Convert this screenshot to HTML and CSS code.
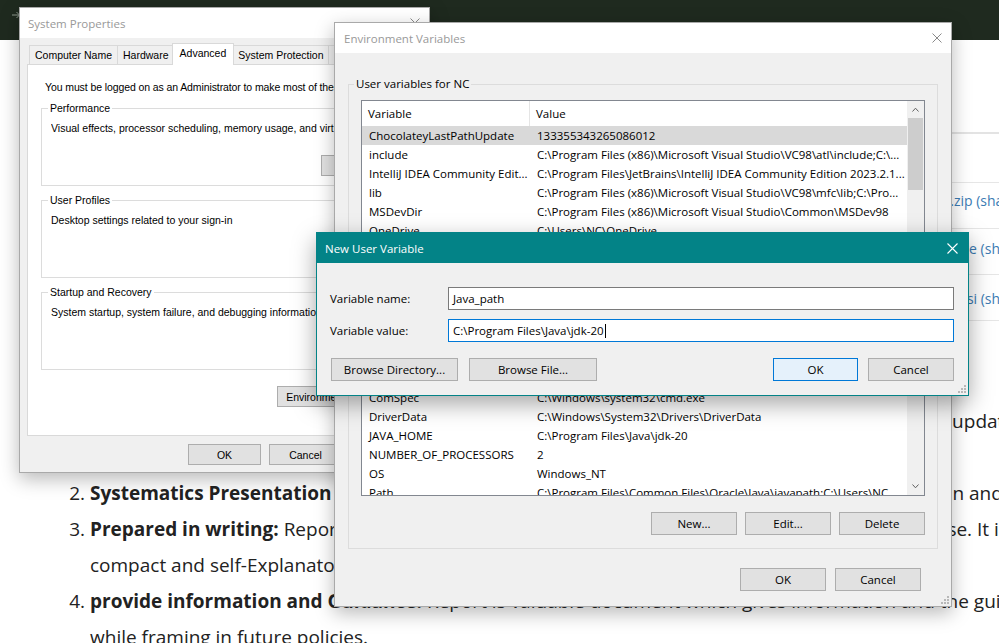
FILE: index.html
```html
<!DOCTYPE html>
<html>
<head>
<meta charset="utf-8">
<title>Environment Variables</title>
<link rel="stylesheet" href="styles.css">
</head>
<body>
<div class="page">
  <header class="topbar">
    <svg class="tb-icon" width="10" height="8" viewBox="0 0 10 8"><path d="M0 4H7.5M4.5 1L7.5 4L4.5 7M9.5 0V8" stroke="#8f998f" fill="none" stroke-width="1"/></svg>
  </header>
  <main class="content">
    <div class="downloads">
      <div class="dl-row dl-head"><span>Product/file description</span><span>File size</span><span>Download</span></div>
      <div class="dl-row"><span>x64 Compressed Archive</span><span>180.71 MB</span><a href="#">jdk-20_windows-x64_bin.zip (sha256)</a></div>
      <div class="dl-row r2"><span>x64 Installer</span><span>159.97 MB</span><a href="#">jdk-20_windows-x64_bin.exe (sha256)</a></div>
      <div class="dl-row r3"><span>x64 MSI Installer</span><span>158.75 MB</span><a href="#">jdk-20_windows-x64_bin.msi (sha256)</a></div>
    </div>
    <ol class="article">
      <li><strong>Up to date information:</strong> A Report contains relevant and up-to-date information, that is regularly updated<br>from time to time.</li>
      <li><strong>Systematics Presentation of facts:</strong> Report is a systematic presentation of fact, figures, conclusion and recommendation.</li>
      <li><strong>Prepared in writing:</strong> Report is always prepared in written form and for the specific official purpose. It is<br>compact and self-Explanatory.</li>
      <li><strong>provide information and Guidance:</strong> Report is valuable document which gives information and the guidance to management<br>while framing in future policies.</li>
    </ol>
  </main>
</div>

<section class="win sysprops">
  <div class="titlebar">
    <span>System Properties</span>
    <svg class="x" width="10" height="10" viewBox="0 0 10 10"><path d="M0.5 0.5L9.5 9.5M9.5 0.5L0.5 9.5" stroke="#8a8a8a" stroke-width="1"/></svg>
  </div>
  <div class="sp-body">
    <div class="tabs">
      <div class="tab">Computer Name</div>
      <div class="tab">Hardware</div>
      <div class="tab sel">Advanced</div>
      <div class="tab">System Protection</div>
      <div class="tab">Remote</div>
    </div>
    <div class="panel">
      <p class="admin">You must be logged on as an Administrator to make most of these changes.</p>
      <fieldset class="grp">
        <legend>Performance</legend>
        <p>Visual effects, processor scheduling, memory usage, and virtual memory</p>
        <div class="grp-btns"><button class="btn sbtn">Settings...</button></div>
      </fieldset>
      <fieldset class="grp">
        <legend>User Profiles</legend>
        <p>Desktop settings related to your sign-in</p>
        <div class="grp-btns"><button class="btn sbtn">Settings...</button></div>
      </fieldset>
      <fieldset class="grp">
        <legend>Startup and Recovery</legend>
        <p>System startup, system failure, and debugging information</p>
        <div class="grp-btns"><button class="btn sbtn">Settings...</button></div>
      </fieldset>
      <div class="env-row"><button class="btn ebtn">Environment Variables...</button></div>
    </div>
    <div class="sp-foot">
      <button class="btn fbtn">OK</button>
      <button class="btn fbtn">Cancel</button>
      <button class="btn fbtn">Apply</button>
    </div>
  </div>
</section>

<section class="win envvars">
  <div class="titlebar">
    <span>Environment Variables</span>
    <svg class="x" width="10" height="10" viewBox="0 0 10 10"><path d="M0.5 0.5L9.5 9.5M9.5 0.5L0.5 9.5" stroke="#8a8a8a" stroke-width="1"/></svg>
  </div>
  <div class="ev-body">
    <fieldset class="egrp">
      <legend>User variables for NC</legend>
      <div class="lv">
        <div class="lv-main">
          <div class="lv-head"><div>Variable</div><div>Value</div></div>
          <div class="lv-row sel"><div>ChocolateyLastPathUpdate</div><div>133355343265086012</div></div>
          <div class="lv-row"><div>include</div><div>C:\Program Files (x86)\Microsoft Visual Studio\VC98\atl\include;C:\...</div></div>
          <div class="lv-row"><div>IntelliJ IDEA Community Edit...</div><div>C:\Program Files\JetBrains\IntelliJ IDEA Community Edition 2023.2.1...</div></div>
          <div class="lv-row"><div>lib</div><div>C:\Program Files (x86)\Microsoft Visual Studio\VC98\mfc\lib;C:\Pro...</div></div>
          <div class="lv-row"><div>MSDevDir</div><div>C:\Program Files (x86)\Microsoft Visual Studio\Common\MSDev98</div></div>
          <div class="lv-row"><div>OneDrive</div><div>C:\Users\NC\OneDrive</div></div>
          <div class="lv-row"><div>OneDriveConsumer</div><div>C:\Users\NC\OneDrive</div></div>
          <div class="lv-row"><div>Path</div><div>C:\Users\NC\AppData\Local\Microsoft\WindowsApps;</div></div>
        </div>
        <div class="sb">
          <div class="sb-btn"><svg width="7" height="5" viewBox="0 0 7 5"><path d="M0.5 4.5L3.5 1.2L6.5 4.5" stroke="#606060" fill="none" stroke-width="1"/></svg></div>
          <div class="sb-thumb"></div>
        </div>
      </div>
      <div class="btnrow">
        <button class="btn ebtn2">New...</button>
        <button class="btn ebtn2">Edit...</button>
        <button class="btn ebtn2">Delete</button>
      </div>
    </fieldset>
    <fieldset class="egrp egrp2">
      <legend>System variables</legend>
      <div class="lv">
        <div class="lv-main">
          <div class="lv-head"><div>Variable</div><div>Value</div></div>
          <div class="lv-row"><div>ChocolateyInstall</div><div>C:\ProgramData\chocolatey</div></div>
          <div class="lv-row"><div>ComSpec</div><div>C:\Windows\system32\cmd.exe</div></div>
          <div class="lv-row"><div>DriverData</div><div>C:\Windows\System32\Drivers\DriverData</div></div>
          <div class="lv-row"><div>JAVA_HOME</div><div>C:\Program Files\Java\jdk-20</div></div>
          <div class="lv-row"><div>NUMBER_OF_PROCESSORS</div><div>2</div></div>
          <div class="lv-row"><div>OS</div><div>Windows_NT</div></div>
          <div class="lv-row"><div>Path</div><div>C:\Program Files\Common Files\Oracle\Java\javapath;C:\Users\NC...</div></div>
        </div>
        <div class="sb">
          <div class="sb-track"></div>
          <div class="sb-btn"><svg width="7" height="5" viewBox="0 0 7 5"><path d="M0.5 0.5L3.5 3.8L6.5 0.5" stroke="#606060" fill="none" stroke-width="1"/></svg></div>
        </div>
      </div>
      <div class="btnrow">
        <button class="btn ebtn2">New...</button>
        <button class="btn ebtn2">Edit...</button>
        <button class="btn ebtn2">Delete</button>
      </div>
    </fieldset>
    <div class="ev-foot">
      <button class="btn ebtn2">OK</button>
      <button class="btn ebtn2">Cancel</button>
    </div>
  </div>
  <svg class="grip" width="8" height="8" viewBox="0 0 8 8"><g fill="#b8b8b8"><rect x="6" y="0" width="2" height="2"/><rect x="3" y="3" width="2" height="2"/><rect x="6" y="3" width="2" height="2"/><rect x="0" y="6" width="2" height="2"/><rect x="3" y="6" width="2" height="2"/><rect x="6" y="6" width="2" height="2"/></g></svg>
</section>

<section class="win newvar">
  <div class="titlebar">
    <span>New User Variable</span>
    <svg class="x" width="11" height="11" viewBox="0 0 11 11"><path d="M0.5 0.5L10.5 10.5M10.5 0.5L0.5 10.5" stroke="#ffffff" stroke-width="1.1"/></svg>
  </div>
  <div class="nv-body">
    <div class="nv-row"><span class="nv-label">Variable name:</span><div class="field">Java_path</div></div>
    <div class="nv-row"><span class="nv-label">Variable value:</span><div class="field focus">C:\Program Files\Java\jdk-20<span class="caret"></span></div></div>
    <div class="nv-btns">
      <div class="nv-left">
        <button class="btn bdir">Browse Directory...</button>
        <button class="btn bfile">Browse File...</button>
      </div>
      <div class="nv-right">
        <button class="btn bok">OK</button>
        <button class="btn bcancel">Cancel</button>
      </div>
    </div>
  </div>
  <svg class="grip" width="8" height="8" viewBox="0 0 8 8"><g fill="#b8b8b8"><rect x="6" y="0" width="2" height="2"/><rect x="3" y="3" width="2" height="2"/><rect x="6" y="3" width="2" height="2"/><rect x="0" y="6" width="2" height="2"/><rect x="3" y="6" width="2" height="2"/><rect x="6" y="6" width="2" height="2"/></g></svg>
</section>
</body>
</html>
```

FILE: styles.css
```css
* { box-sizing: border-box; }
html, body { margin: 0; padding: 0; }
body {
  width: 999px;
  height: 643px;
  overflow: hidden;
  position: relative;
  background: #fff;
  font-family: "Open Sans", "Noto Sans", sans-serif;
  color: #000;
}
.page { width: 1400px; }

/* background web page */
.topbar { height: 40px; background: #1f2a1f; padding: 11px 0 0 12px; }
.tb-icon { display: block; }
.content { padding-top: 92px; }
.downloads { margin-left: 70px; border-top: 2px solid #e3e3e3; }
.dl-row {
  display: grid;
  grid-template-columns: 420px 302px auto;
  height: 46px;
  padding-top: 8px;
  border-bottom: 1px solid #e6e6e6;
  font-size: 14px;
  line-height: 20px;
  color: #333;
  white-space: nowrap;
}
.dl-row.r2 { padding-top: 10px; }
.dl-row.r3 { padding-top: 14px; }
.dl-head { height: 49px; padding-top: 14px; font-weight: 700; }
.dl-row a { color: #3b7bb3; text-decoration: none; }
.article {
  margin: 82px 0 0;
  padding-left: 90px;
  font-size: 19px;
  line-height: 36px;
  color: #222;
  white-space: nowrap;
}
.article strong { font-weight: 700; }

/* windows */
.win {
  position: absolute;
  display: flex;
  flex-direction: column;
  background: #f0f0f0;
  border: 1px solid #a9a9a9;
  box-shadow: 0 6px 18px rgba(0, 0, 0, 0.28);
}
.titlebar {
  flex: none;
  height: 30px;
  display: flex;
  align-items: center;
  justify-content: space-between;
  background: #fff;
  color: #999;
  font-family: "Open Sans", "Noto Sans", sans-serif;
  font-size: 11.5px;
}
.x { display: block; }
.btn {
  font: inherit;
  color: #000;
  background: #e1e1e1;
  border: 1px solid #adadad;
  margin: 0;
  padding: 0;
  white-space: nowrap;
  overflow: hidden;
}

/* System Properties */
.sysprops {
  left: 19px;
  top: 7px;
  width: 411px;
  height: 466px;
  font-family: "Liberation Sans", Arial, sans-serif;
  font-size: 10.5px;
}
.sysprops .titlebar { padding: 0 9px 0 8px; }
.sp-body { padding: 7px 6px 0 7px; }
.tabs { display: flex; align-items: flex-end; height: 19px; padding-left: 2px; }
.tab {
  height: 19px;
  padding: 1px 5px 0;
  margin-right: -1px;
  border: 1px solid #d9d9d9;
  border-bottom: 0;
  line-height: 17px;
  background: #f0f0f0;
  white-space: nowrap;
}
.tab.sel {
  position: relative;
  z-index: 2;
  height: 22px;
  margin: 0 -2px -1px;
  padding: 1px 7px 0;
  background: #fff;
}
.panel {
  height: 372px;
  background: #fff;
  border: 1px solid #d9d9d9;
  padding: 15px 13px 0;
  overflow: hidden;
}
.admin { margin: 0 0 7px 4px; line-height: 14px; white-space: nowrap; letter-spacing: -0.1px; }
.grp {
  margin: 0;
  padding: 6px 12px 9px 9px;
  border: 1px solid #dcdcdc;
  min-inline-size: 0;
}
.grp + .grp { margin-top: 7px; }
.grp legend { padding: 0 2px; margin-left: -3px; line-height: 14px; }
.grp p { margin: 0; line-height: 14px; white-space: nowrap; overflow: hidden; }
.grp-btns { display: flex; justify-content: flex-end; margin-top: 20px; }
.sbtn { width: 75px; height: 21px; }
.env-row { display: flex; justify-content: flex-end; margin-top: 16px; }
.ebtn { width: 132px; height: 21px; }
.sp-foot { display: flex; justify-content: flex-end; gap: 8px; margin-top: 8px; }
.fbtn { width: 73px; height: 21px; }

/* Environment Variables */
.envvars {
  left: 334px;
  top: 22px;
  width: 618px;
  height: 585px;
  font-size: 11.5px;
}
.envvars .titlebar { padding: 0 9px 0 9px; }
.ev-body { padding: 23px 13px 0; }
.egrp {
  margin: 0;
  padding: 8px 12px 13px;
  border: 1px solid #dcdcdc;
  min-inline-size: 0;
}
.egrp legend { padding: 0 2px; margin-left: -7px; line-height: 16px; }
.egrp2 { margin-top: 12px; padding-top: 9px; }
.lv {
  display: flex;
  height: 153px;
  border: 1px solid #828790;
  background: #fff;
  overflow: hidden;
}
.lv-main { flex: 1; min-width: 0; overflow: hidden; }
.lv-head { display: grid; grid-template-columns: 168px 1fr; height: 25px; line-height: 25px; }
.lv-head div { padding-left: 6px; }
.lv-head div:first-child { border-right: 1px solid #e5e5e5; }
.lv-row { display: grid; grid-template-columns: 168px 1fr; height: 19px; line-height: 19px; }
.lv-row div { padding-left: 7px; white-space: nowrap; overflow: hidden; }
.lv-row.sel { background: #d9d9d9; }
.sb { flex: none; width: 17px; background: #f0f0f0; display: flex; flex-direction: column; }
.sb-btn { flex: none; height: 17px; display: flex; align-items: center; justify-content: center; }
.sb-btn svg { display: block; }
.sb-thumb { height: 72px; margin: 0 1px; background: #cdcdcd; }
.sb-track { flex: 1; }
.btnrow { display: flex; justify-content: flex-end; gap: 8px; margin-top: 16px; }
.ebtn2 { width: 86px; height: 23px; }
.ev-foot { display: flex; justify-content: flex-end; gap: 9px; margin-top: 19px; padding-right: 17px; }
.grip { position: absolute; right: 2px; bottom: 2px; display: block; }

/* New User Variable */
.newvar {
  left: 316px;
  top: 232px;
  width: 653px;
  height: 164px;
  border-color: #038387;
  font-size: 11.5px;
  box-shadow: 0 8px 22px rgba(0, 0, 0, 0.35);
}
.newvar .titlebar { background: #038387; color: #fff; padding: 0 10px 0 8px; }
.nv-body { padding: 24px 14px 14px 13px; }
.nv-row { display: flex; align-items: center; height: 23px; }
.nv-row + .nv-row { margin-top: 9px; }
.nv-label { flex: none; width: 118px; }
.field {
  flex: 1;
  height: 23px;
  border: 1px solid #7a7a7a;
  background: #fff;
  padding-left: 4px;
  line-height: 21px;
  white-space: nowrap;
}
.field.focus { border-color: #0078d7; }
.caret { display: inline-block; width: 1px; height: 14px; background: #000; vertical-align: -3px; margin-left: 1px; }
.nv-btns { display: flex; justify-content: space-between; margin-top: 16px; padding-left: 1px; }
.nv-left { display: flex; gap: 11px; }
.nv-right { display: flex; gap: 10px; }
.nv-btns .btn { height: 23px; }
.bdir { width: 127px; }
.bfile { width: 128px; }
.bok { width: 85px; background: #e5f1fb; border-color: #0078d7; }
.bcancel { width: 86px; }
```
